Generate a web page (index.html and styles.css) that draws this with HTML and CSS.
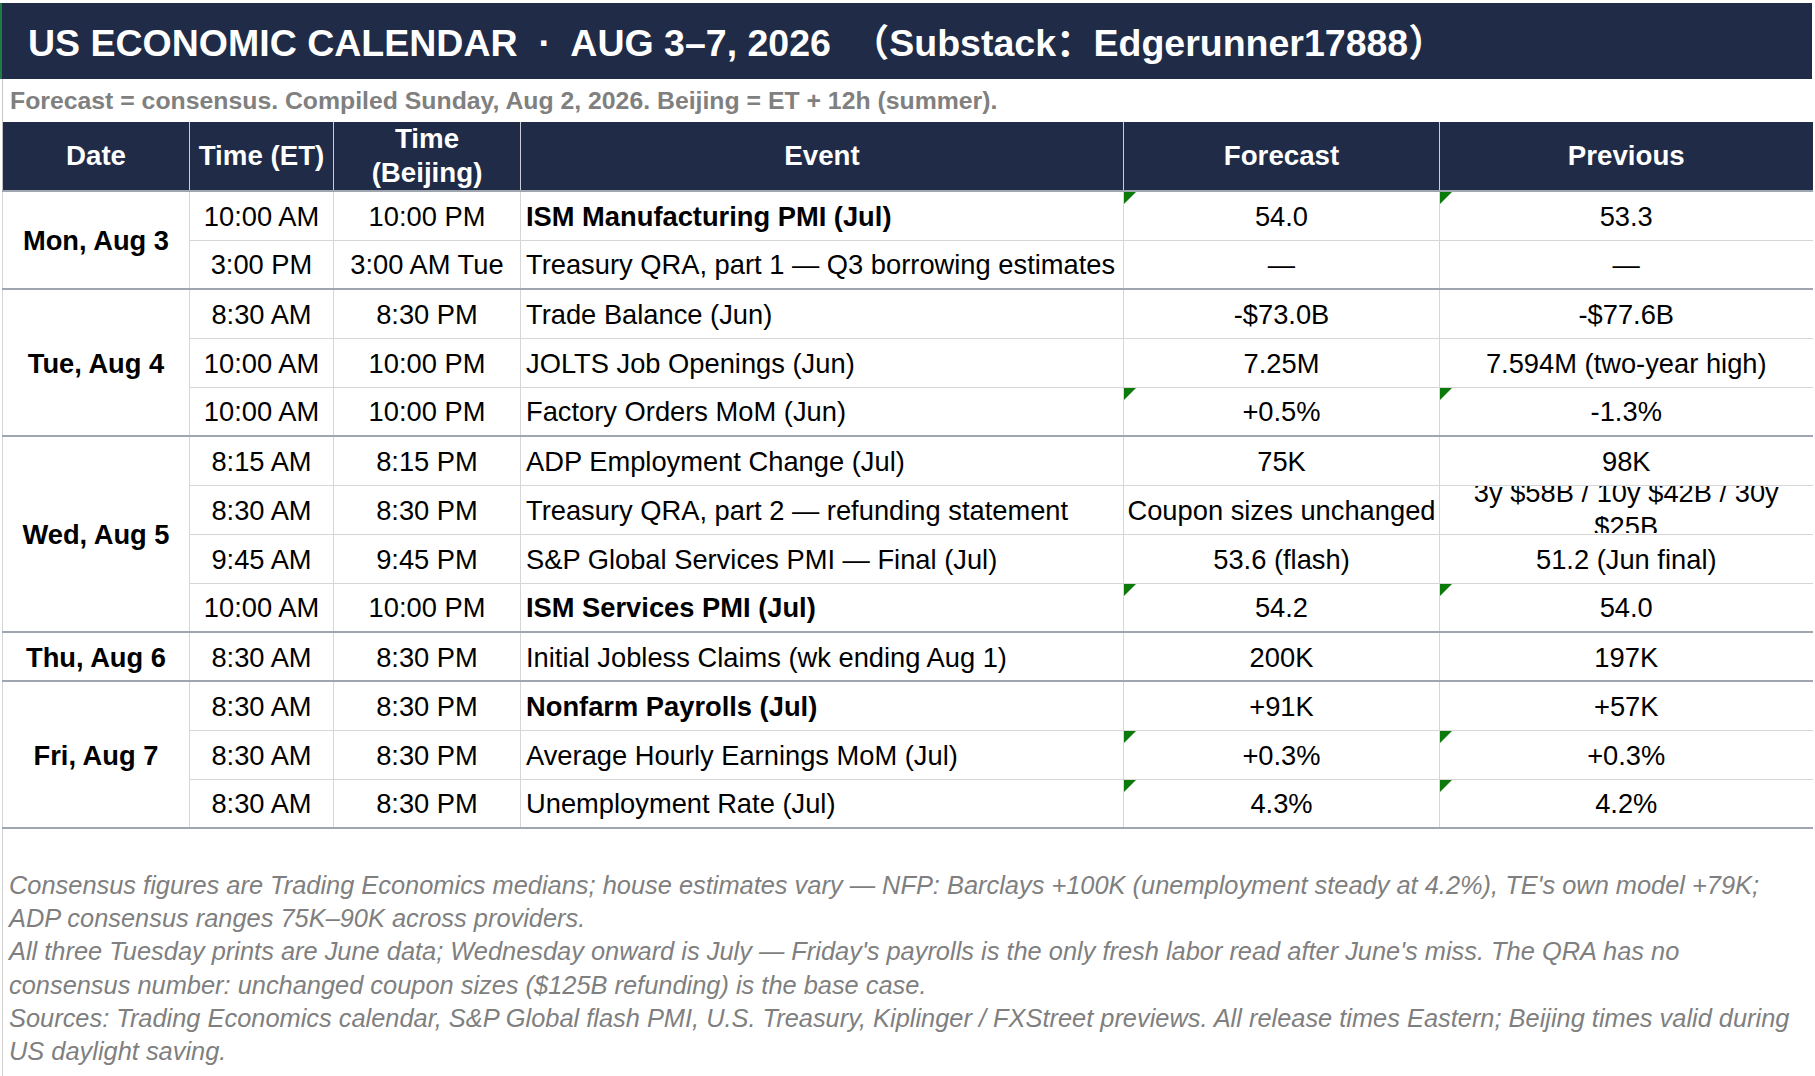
FILE: index.html
```html
<!DOCTYPE html>
<html lang="en">
<head>
<meta charset="utf-8">
<title>US Economic Calendar · Aug 3–7, 2026</title>
<link rel="stylesheet" href="styles.css">
</head>
<body>
<div class="sheet">
  <div class="title">US ECONOMIC CALENDAR &nbsp;·&nbsp; AUG 3–7, 2026 &nbsp;（Substack：Edgerunner17888）</div>
  <div class="subtitle">Forecast = consensus. Compiled Sunday, Aug 2, 2026. Beijing = ET + 12h (summer).</div>
  <table class="cal">
    <colgroup>
      <col class="c-date"><col class="c-et"><col class="c-bj"><col class="c-event"><col class="c-fc"><col class="c-prev">
    </colgroup>
    <thead>
      <tr>
        <th>Date</th>
        <th>Time (ET)</th>
        <th>Time<br>(Beijing)</th>
        <th>Event</th>
        <th>Forecast</th>
        <th>Previous</th>
      </tr>
    </thead>
    <tbody>
      <tr class="grp">
        <td class="date" rowspan="2">Mon, Aug 3</td>
        <td>10:00 AM</td><td>10:00 PM</td>
        <td class="event"><b>ISM Manufacturing PMI (Jul)</b></td>
        <td class="flag">54.0</td><td class="flag">53.3</td>
      </tr>
      <tr>
        <td>3:00 PM</td><td>3:00 AM Tue</td>
        <td class="event">Treasury QRA, part 1 — Q3 borrowing estimates</td>
        <td>—</td><td>—</td>
      </tr>
      <tr class="grp">
        <td class="date" rowspan="3">Tue, Aug 4</td>
        <td>8:30 AM</td><td>8:30 PM</td>
        <td class="event">Trade Balance (Jun)</td>
        <td>-$73.0B</td><td>-$77.6B</td>
      </tr>
      <tr>
        <td>10:00 AM</td><td>10:00 PM</td>
        <td class="event">JOLTS Job Openings (Jun)</td>
        <td>7.25M</td><td>7.594M (two-year high)</td>
      </tr>
      <tr>
        <td>10:00 AM</td><td>10:00 PM</td>
        <td class="event">Factory Orders MoM (Jun)</td>
        <td class="flag">+0.5%</td><td class="flag">-1.3%</td>
      </tr>
      <tr class="grp">
        <td class="date" rowspan="4">Wed, Aug 5</td>
        <td>8:15 AM</td><td>8:15 PM</td>
        <td class="event">ADP Employment Change (Jul)</td>
        <td>75K</td><td>98K</td>
      </tr>
      <tr>
        <td>8:30 AM</td><td>8:30 PM</td>
        <td class="event">Treasury QRA, part 2 — refunding statement</td>
        <td>Coupon sizes unchanged</td>
        <td class="clipcell"><div class="clip"><div class="wrap">3y $58B / 10y $42B / 30y $25B</div></div></td>
      </tr>
      <tr>
        <td>9:45 AM</td><td>9:45 PM</td>
        <td class="event">S&amp;P Global Services PMI — Final (Jul)</td>
        <td>53.6 (flash)</td><td>51.2 (Jun final)</td>
      </tr>
      <tr>
        <td>10:00 AM</td><td>10:00 PM</td>
        <td class="event"><b>ISM Services PMI (Jul)</b></td>
        <td class="flag">54.2</td><td class="flag">54.0</td>
      </tr>
      <tr class="grp">
        <td class="date">Thu, Aug 6</td>
        <td>8:30 AM</td><td>8:30 PM</td>
        <td class="event">Initial Jobless Claims (wk ending Aug 1)</td>
        <td>200K</td><td>197K</td>
      </tr>
      <tr class="grp">
        <td class="date" rowspan="3">Fri, Aug 7</td>
        <td>8:30 AM</td><td>8:30 PM</td>
        <td class="event"><b>Nonfarm Payrolls (Jul)</b></td>
        <td>+91K</td><td>+57K</td>
      </tr>
      <tr>
        <td>8:30 AM</td><td>8:30 PM</td>
        <td class="event">Average Hourly Earnings MoM (Jul)</td>
        <td class="flag">+0.3%</td><td class="flag">+0.3%</td>
      </tr>
      <tr class="last">
        <td>8:30 AM</td><td>8:30 PM</td>
        <td class="event">Unemployment Rate (Jul)</td>
        <td class="flag">4.3%</td><td class="flag">4.2%</td>
      </tr>
    </tbody>
  </table>
  <div class="notes">
    <p>Consensus figures are Trading Economics medians; house estimates vary — NFP: Barclays +100K (unemployment steady at 4.2%), TE's own model +79K;<br>ADP consensus ranges 75K–90K across providers.</p>
    <p>All three Tuesday prints are June data; Wednesday onward is July — Friday's payrolls is the only fresh labor read after June's miss. The QRA has no<br>consensus number: unchanged coupon sizes ($125B refunding) is the base case.</p>
    <p>Sources: Trading Economics calendar, S&amp;P Global flash PMI, U.S. Treasury, Kiplinger / FXStreet previews. All release times Eastern; Beijing times valid during<br>US daylight saving.</p>
  </div>
</div>
</body>
</html>
```

FILE: styles.css
```css
html, body {
  margin: 0;
  padding: 0;
  background: #ffffff;
}

body {
  font-family: "Liberation Sans", Arial, "Noto Sans CJK SC", sans-serif;
  color: #000000;
}

.sheet {
  width: 1810px;
  padding: 3px 0 0 2px;
  border-top: 2px solid #e3e3e3;
  margin-top: -2px;
}

.title {
  height: 73px;
  display: flex;
  align-items: center;
  padding-left: 26px;
  padding-bottom: 3px;
  margin-left: -2px;
  border-left: 2px solid #1f7a44;
  background: #202b47;
  color: #ffffff;
  font-weight: bold;
  font-size: 37.5px;
  font-family: "Liberation Sans", Arial, "Noto Sans CJK SC", sans-serif;
  white-space: nowrap;
}

.subtitle {
  height: 43px;
  display: flex;
  align-items: center;
  padding-left: 7px;
  color: #808080;
  font-weight: bold;
  font-size: 24.8px;
  white-space: nowrap;
  border-left: 1px solid #c8c8c8;
}

.cal {
  width: 1810px;
  table-layout: fixed;
  border-collapse: collapse;
  border-left: 1px solid #c0c0c0;
  font-size: 27.3px;
}

.c-date { width: 187px; }
.c-et { width: 144px; }
.c-bj { width: 187px; }
.c-event { width: 603px; }
.c-fc { width: 316px; }
.c-prev { width: 373px; }

.cal th {
  height: 67px;
  padding: 0;
  background: #202b47;
  color: #ffffff;
  font-weight: bold;
  font-size: 27.7px;
  line-height: 34px;
  text-align: center;
  vertical-align: middle;
  border-right: 1px solid #c9cdd4;
  border-bottom: 2px solid #a0a6b0;
}

.cal th:last-child {
  border-right: none;
}

.cal tbody tr {
  height: 49px;
}

.cal td {
  padding: 2px 0 0 0;
  text-align: center;
  vertical-align: middle;
  white-space: nowrap;
  border: 1px solid #d6d6d6;
  line-height: 30px;
}

.cal td:last-child {
  border-right: none;
}

.cal tr.grp td {
  border-top: 2px solid #a0a6b0;
}

.cal td.date {
  font-weight: bold;
  font-size: 27.3px;
}

.cal tr.last td,
.cal tbody tr:last-child td,
.cal tr.grp:nth-last-child(3) td.date {
  border-bottom: 2px solid #a0a6b0;
}

.cal td.event {
  text-align: left;
  padding-left: 5px;
}

.cal td.flag {
  position: relative;
}

.cal td.flag::before {
  content: "";
  position: absolute;
  top: 0;
  left: 0;
  border-top: 12px solid #0b7a0b;
  border-right: 12px solid transparent;
}

.cal td.clipcell {
  padding: 0;
}

.clip {
  height: 47px;
  display: flex;
  align-items: center;
  justify-content: center;
  overflow: hidden;
}

.wrap {
  white-space: normal;
  width: 345px;
  line-height: 34px;
  text-align: center;
  flex-shrink: 0;
}

.notes {
  padding: 40px 0 8px 6px;
  border-left: 1px solid #d0d0d0;
  color: #7f7f7f;
  font-style: italic;
  font-size: 25.4px;
  line-height: 33.2px;
}

.notes p {
  margin: 0;
  white-space: nowrap;
}
```
